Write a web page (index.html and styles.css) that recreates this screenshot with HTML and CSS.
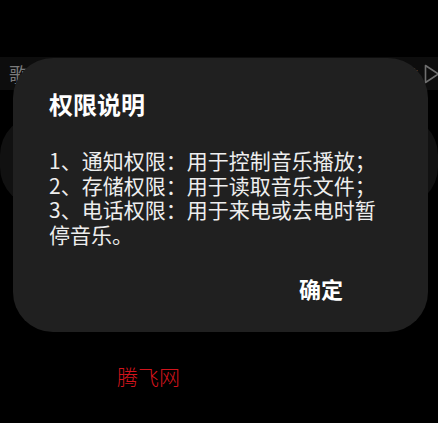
FILE: index.html
```html
<!DOCTYPE html>
<html lang="zh-CN">
<head>
    <meta charset="UTF-8">
    <meta name="viewport" content="width=device-width, initial-scale=1.0">
    <title>权限说明</title>
    <link rel="stylesheet" href="styles.css">
</head>
<body>

<!-- Page content behind the dialog -->
<section class="page">
    <div class="list-row">
        <span class="row-title">歌单列表</span>
        <span class="row-right">
            <span class="row-count">共12首</span>
            <svg class="play-icon" width="16" height="20" viewBox="0 0 16 20">
                <path d="M1.5 1.5 L14.5 10 L1.5 18.5 Z" fill="none" stroke="#6e6e6e" stroke-width="1.6" stroke-linejoin="round"/>
            </svg>
        </span>
    </div>
    <div class="card"></div>
</section>

<!-- Permission dialog -->
<div class="dialog">
    <h2 class="dialog-title">权限说明</h2>
    <p class="dialog-text">1、通知权限：用于控制音乐播放；<br>2、存储权限：用于读取音乐文件；<br>3、电话权限：用于来电或去电时暂停音乐。</p>
    <div class="dialog-actions">
        <button class="confirm-btn">确定</button>
    </div>
</div>

<div class="watermark">腾飞网</div>

</body>
</html>
```

FILE: styles.css
```css
body {
    margin: 0;
    padding: 0;
    width: 438px;
    height: 423px;
    overflow: hidden;
    position: relative;
    background-color: #000;
    color: #fff;
    font-family: "Noto Sans CJK SC", "Noto Sans", sans-serif;
}

/* Background page */
.page {
    padding-top: 57px;
}

.list-row {
    height: 33px;
    background-color: #0d0d0d;
    display: flex;
    align-items: center;
    justify-content: space-between;
    padding-left: 9px;
}

.row-title {
    font-size: 19px;
    color: #7a7a7a;
}

.row-right {
    display: flex;
    align-items: center;
    gap: 6px;
    margin-right: -2px;
}

.row-count {
    font-size: 14px;
    color: #6e6e6e;
}

.card {
    margin-top: 25px;
    height: 92px;
    background-color: #111;
    border-radius: 40px;
}

/* Dialog */
.dialog {
    position: absolute;
    left: 13px;
    top: 58px;
    width: 415px;
    box-sizing: border-box;
    padding: 34px 36px 33px;
    background-color: #202020;
    border-radius: 40px;
}

.dialog-title {
    margin: 0 0 32px;
    font-size: 24px;
    line-height: 24px;
    font-weight: bold;
}

.dialog-text {
    margin: 0;
    font-size: 21px;
    line-height: 24.5px;
    color: #eee;
}

.dialog-actions {
    display: flex;
    justify-content: flex-end;
    margin-top: 31px;
}

.confirm-btn {
    background: none;
    border: none;
    padding: 0;
    margin-right: 49px;
    color: #fff;
    font-family: inherit;
    font-size: 22px;
    line-height: 22px;
    font-weight: bold;
}

.watermark {
    position: absolute;
    left: 117px;
    top: 364px;
    font-size: 21px;
    line-height: 24px;
    font-weight: 300;
    color: #d2141c;
}
```
